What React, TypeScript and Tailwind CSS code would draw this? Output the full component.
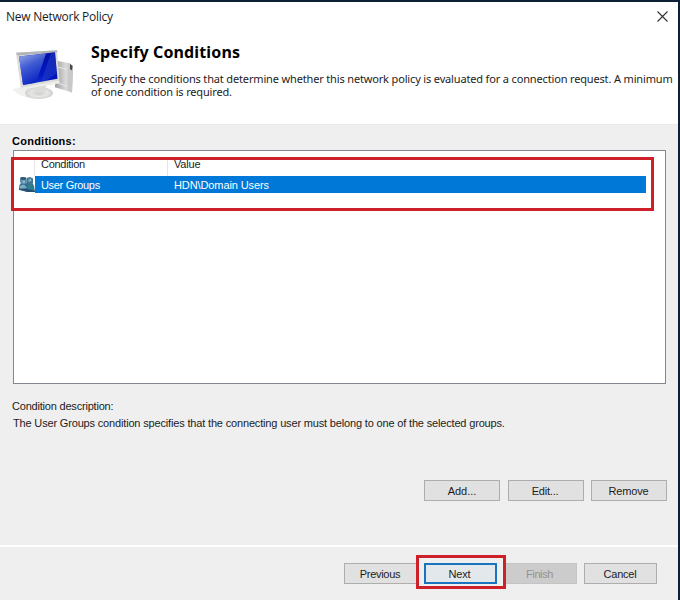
import type { ReactNode } from "react";
import clsx from "clsx";

interface DialogButtonProps {
  children: ReactNode;
  className?: string;
  variant?: "default" | "focused" | "disabled";
}

function DialogButton({ children, className, variant = "default" }: DialogButtonProps) {
  return (
    <button
      type="button"
      disabled={variant === "disabled"}
      className={clsx(
        "flex h-[21px] items-center justify-center whitespace-nowrap",
        variant === "default" && "border border-[#adadad] bg-[#e1e1e1]",
        variant === "focused" && "border-2 border-[#1c73bd] bg-[#e3e8ec]",
        variant === "disabled" && "border border-[#c4c4c4] bg-[#cccccc] text-[#929292]",
        className
      )}
    >
      {children}
    </button>
  );
}

function ComputerIcon() {
  return (
    <svg width="62" height="57" viewBox="0 0 62 54" preserveAspectRatio="none" className="block">
      <defs>
        <linearGradient id="screen" x1="0" y1="1" x2="1" y2="0">
          <stop offset="0" stopColor="#2a4cd4" />
          <stop offset="0.45" stopColor="#0318c4" />
          <stop offset="1" stopColor="#020c9c" />
        </linearGradient>
        <linearGradient id="glare" x1="0" y1="0" x2="0.4" y2="1">
          <stop offset="0" stopColor="#b8c6ee" />
          <stop offset="0.45" stopColor="#4a68d6" />
          <stop offset="1" stopColor="#0a22c0" />
        </linearGradient>
        <linearGradient id="tower" x1="0" y1="0" x2="1" y2="0">
          <stop offset="0" stopColor="#9c9c9c" />
          <stop offset="0.6" stopColor="#dadada" />
          <stop offset="1" stopColor="#b5b5b5" />
        </linearGradient>
        <radialGradient id="stand">
          <stop offset="0" stopColor="#cccccb" />
          <stop offset="0.6" stopColor="#e6e6e4" />
          <stop offset="1" stopColor="#d0d0cd" />
        </radialGradient>
      </defs>
      <path d="M0 41L14 38L30 44L27 50Q10 51 0 41Z" fill="#f1f1ef" />
      <path d="M44 14L57 16L61 19L60 44L43 39Z" fill="url(#tower)" />
      <path d="M57 16L61 19L60 44L56 42Z" fill="#c8c8c8" />
      <path d="M58 17L60.500 19L60 23L58 22Z" fill="#48484a" />
      <path d="M46 20L55 22M45 35L55 38" stroke="#eeeeee" strokeWidth="0.8" />
      <ellipse cx="27" cy="44.500" rx="14" ry="5.800" fill="url(#stand)" />
      <path d="M21 36L34 33L34 42Q28 46 21 43Z" fill="#dcdcd9" />
      <path d="M4 6.500L45 4L47.500 35L9 41.500Z" fill="#dcdcda" />
      <path d="M4 6.500L45 4L45.500 6L5.500 9Z" fill="#b0b4b7" />
      <path d="M8.500 39.500L47 33L47.500 35L9 41.500Z" fill="#eeeeeb" />
      <path d="M7 10L43 6L45.500 31L11 37Z" fill="url(#screen)" />
      <path d="M7 10L34 7L24 34.700L11 37Z" fill="url(#glare)" opacity="0.85" />
      <path d="M39 6.500L43 6L44.500 26L34 33L29 33.800Z" fill="#2742c7" opacity="0.5" />
    </svg>
  );
}

function UserGroupIcon() {
  return (
    <svg width="16" height="15" viewBox="0 0 16 15" className="block">
      <path d="M0 9L2 6L13 5L15 9L16 15L9 15L0 13Z" fill="#356c8c" />
      <path d="M1 1L3 0L7 0.500L8 4L7 7L3 7L1 5Z" fill="#5a8eac" />
      <path d="M7.500 1L11 0L14 1.500L14 6L11 8L8 6Z" fill="#44758f" />
      <path d="M1 1L3 0L7 0.500L6.500 3L3 3Z" fill="#315a72" />
      <path d="M9 2.500L12 1.500L12.500 4L10 5Z" fill="#7fb3c8" />
      <path d="M3.500 3.500L6 3.500L6 5.500L4 6Z" fill="#8fbdd0" />
      <path d="M0 9L5 7.500L8 11L1 11.500Z" fill="#79aec7" />
      <path d="M8 8L13 7.500L15 12L9 11.500Z" fill="#2c8190" />
      <path d="M0 12L8 12L16 14L16 15L8 15Z" fill="#244f73" />
    </svg>
  );
}

export default function App() {
  return (
    <div className="flex h-[600px] w-[680px] flex-col overflow-hidden border-t-2 border-r-2 border-[#0e2036] bg-[#efefef] font-['Liberation_Sans',sans-serif] text-[11px] leading-[14px] text-[#1c1c1c]">
      <header className="h-[123px] shrink-0 border-b border-[#e9e9e9] bg-white">
        <div className="flex h-[28px] items-center justify-between pr-[10px] pl-[6px]">
          <h1 className="mt-0.5 font-['Open_Sans',sans-serif] text-[12px] leading-[16px] tracking-[-0.25px] whitespace-nowrap">New Network Policy</h1>
          <svg width="11" height="11" viewBox="0 0 11 11">
            <path d="M0.500 0.500L10.500 10.500M10.500 0.500L0.500 10.500" stroke="#333" strokeWidth="1.100" />
          </svg>
        </div>
        <div className="flex pl-3">
          <div className="mt-4 w-[79px] shrink-0">
            <ComputerIcon />
          </div>
          <div className="pt-3 whitespace-nowrap">
            <h2 className="font-['Noto_Sans',sans-serif] text-[16px] leading-5 font-bold tracking-[0.13px] text-black">Specify Conditions</h2>
            <div className="mt-[10px] font-['Noto_Sans',sans-serif] text-[11px] leading-[13px] tracking-[-0.155px]">
              <p>Specify the conditions that determine whether this network policy is evaluated for a connection request. A minimum</p>
              <p>of one condition is required.</p>
            </div>
          </div>
        </div>
      </header>

      <main className="flex h-[420px] shrink-0 flex-col pt-[9px] pr-3 pl-[13px]">
        <h3 className="-ml-px h-[16px] font-bold tracking-[0.25px] text-black">Conditions:</h3>
        <div className="relative h-[234px] w-[653px] border border-[#828790] bg-white">
          <div className="grid h-[25px] grid-cols-[21px_133px_1fr] items-stretch pt-[6px]">
            <span className="border-r border-[#e5e5e5]" />
            <span className="border-r border-[#e5e5e5] pl-[6px] tracking-[-0.28px]">Condition</span>
            <span className="pl-[6px] tracking-[-0.2px]">Value</span>
          </div>
          <div className="flex h-[17px] items-center">
            <span className="w-[21px] pl-[5px]">
              <UserGroupIcon />
            </span>
            <div className="grid h-[17px] w-[611px] grid-cols-[133px_1fr] items-center bg-[#0078d7] text-white">
              <span className="pl-[6px] tracking-[-0.32px]">User Groups</span>
              <span className="pl-[6px] tracking-[-0.1px]">HDN\Domain Users</span>
            </div>
          </div>
          <div className="pointer-events-none absolute top-[6px] -left-[3px] h-[54px] w-[643px] border-3 border-[#cd2029]" />
        </div>
        <p className="mt-[15px] -ml-px tracking-[-0.2px]">Condition description:</p>
        <p className="mt-[3px] tracking-[-0.165px]">The User Groups condition specifies that the connecting user must belong to one of the selected groups.</p>
        <div className="mt-auto mb-[44px] flex justify-end">
          <DialogButton className="mr-2 w-[76px]">Add...</DialogButton>
          <DialogButton className="mr-[7px] w-[76px] pr-0.5 tracking-[-0.2px]">Edit...</DialogButton>
          <DialogButton className="-mr-px w-[76px] pr-px tracking-[-0.2px]">Remove</DialogButton>
        </div>
      </main>

      <footer className="flex grow items-start justify-end border-t-2 border-white pt-4 pr-[21px]">
        <DialogButton className="mr-[7px] w-[73px] pr-px tracking-[-0.3px]">Previous</DialogButton>
        <div className="relative mr-[7px]">
          <DialogButton variant="focused" className="w-[73px] pr-0.5 tracking-[-0.2px]">Next</DialogButton>
          <div className="pointer-events-none absolute -top-2 -left-2 h-[34px] w-[90px] border-3 border-[#cd2029]" />
        </div>
        <DialogButton variant="disabled" className="mr-[7px] w-[73px] pr-0.5 tracking-[-0.4px]">Finish</DialogButton>
        <DialogButton className="w-[73px] pr-px tracking-[-0.2px]">Cancel</DialogButton>
      </footer>
    </div>
  );
}
